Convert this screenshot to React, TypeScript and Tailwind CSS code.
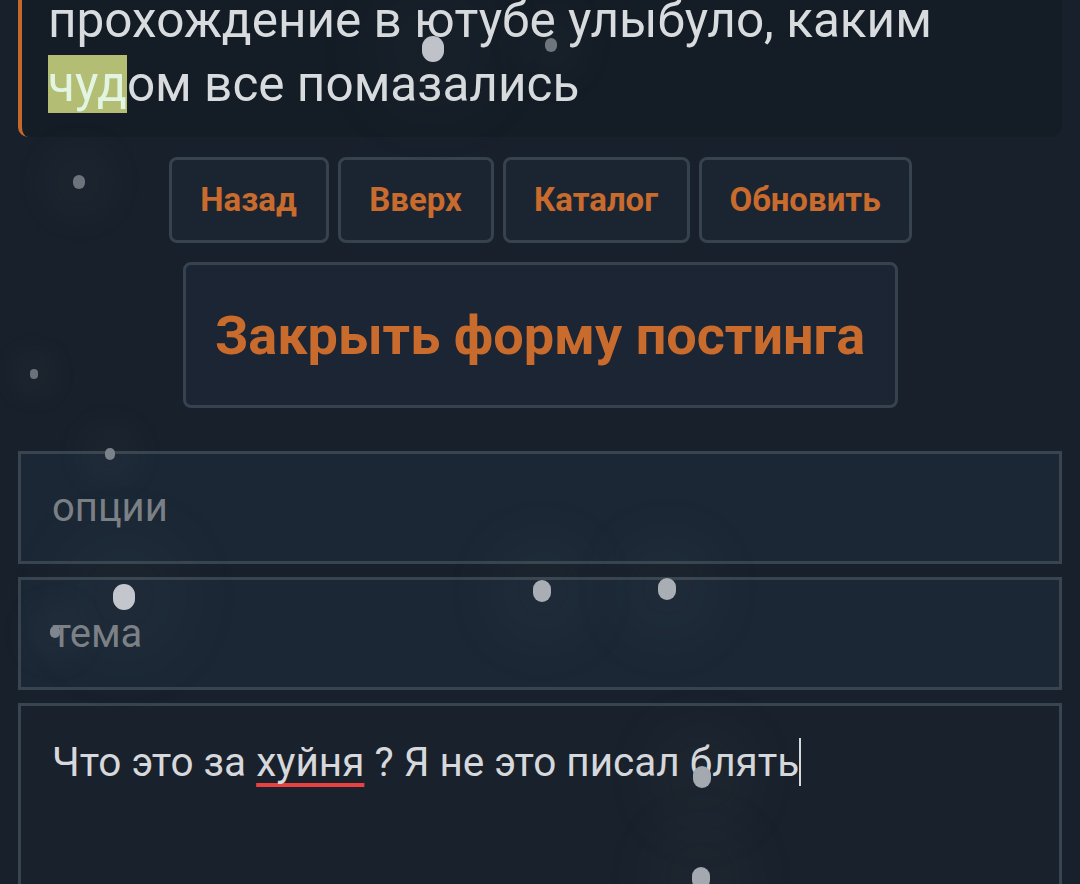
import React from "react";

const dots: { x: number; y: number; r: number; c: string }[] = [
  { x: 433, y: 49, r: 11, c: "#bfc3c9" },
  { x: 551, y: 45, r: 6, c: "#6f757d" },
  { x: 79, y: 182, r: 6, c: "#6e737b" },
  { x: 34, y: 374, r: 4, c: "#6b7079" },
  { x: 110, y: 454, r: 5, c: "#7c828a" },
  { x: 124, y: 597, r: 11, c: "#c3c7cd" },
  { x: 542, y: 591, r: 9, c: "#a9aeb5" },
  { x: 667, y: 589, r: 9, c: "#a9aeb5" },
  { x: 55, y: 632, r: 5, c: "#80868e" },
  { x: 702, y: 777, r: 9, c: "#a4a9b0" },
  { x: 701, y: 878, r: 9, c: "#a4a9b0" },
];

export default function App() {
  const font = { fontFamily: "Roboto, 'Noto Sans', sans-serif" };
  return (
    <div
      className="relative w-[1080px] h-[884px] overflow-hidden bg-[#18202b] text-[#d9dcdf]"
      style={font}
    >
      {/* quoted post card */}
      <div className="mx-[18px] mt-[-40px] rounded-br-[12px] rounded-bl-[10px] border-l-[4px] border-[#c5682c] bg-[#141c26] pl-[26px] pt-[28px] pb-[21px]">
        <p className="text-[49.5px] leading-[64px]">
          прохождение в ютубе улыбуло, каким
          <br />
          <span className="bg-[#b3bd74] text-[#e2f5e2]">чуд</span>ом все помазались
        </p>
      </div>

      {/* nav buttons */}
      <div className="mt-[20px] flex justify-center gap-[9px]">
        {[
          ["Назад", "w-[160px]"],
          ["Вверх", "w-[156px]"],
          ["Каталог", "w-[187px]"],
          ["Обновить", "w-[213px]"],
        ].map(([t, w]) => (
          <div
            key={t}
            className={`${w} flex h-[86px] items-center justify-center rounded-[8px] border-[3px] border-[#36424e] bg-[#1b2532] text-[33px] font-bold text-[#c96b2d]`}
          >
            {t}
          </div>
        ))}
      </div>

      <div className="mt-[19px] flex justify-center">
        <div className="flex h-[146px] w-[715px] items-center justify-center rounded-[8px] border-[3px] border-[#36424e] bg-[#1b2533] text-[54px] font-bold text-[#c96b2d]">
          Закрыть форму постинга
        </div>
      </div>

      {/* form fields */}
      <div className="mx-[18px] mt-[43px] flex flex-col gap-[13px]">
        <div className="flex h-[113px] items-center border-[3px] border-[#38444f] bg-[#1b2735] pl-[31px] text-[40px] text-[#7b8086]">
          опции
        </div>
        <div className="flex h-[113px] items-center border-[3px] border-[#38444f] bg-[#1b2735] pl-[31px] text-[40px] text-[#7b8086]">
          тема
        </div>
        <div className="h-[220px] border-[3px] border-[#38444f] bg-[#19212c] pl-[31px] pt-[32px]">
          <p className="text-[40.5px] leading-[48px] text-[#d6d8db]">
            Что это за{" "}
            <span className="underline decoration-[#e8413f] decoration-[4px] underline-offset-[7px] [text-decoration-skip-ink:none]">
              хуйня
            </span>{" "}
            ? Я не это писал блять
            <span className="inline-block h-[48px] w-[2px] align-top bg-[#d6d8db]" />
          </p>
        </div>
      </div>

      {/* snow dots */}
      {dots.map((d, i) => (
        <div
          key={i}
          className="pointer-events-none absolute rounded-full"
          style={{
            left: d.x - d.r,
            top: d.y - d.r * 1.2,
            width: d.r * 2,
            height: d.r * 2.4,
            background: d.c,
            boxShadow: `0 0 ${d.r * 8}px ${d.r * 4}px rgba(160,170,185,0.05)`,
          }}
        />
      ))}
    </div>
  );
}
